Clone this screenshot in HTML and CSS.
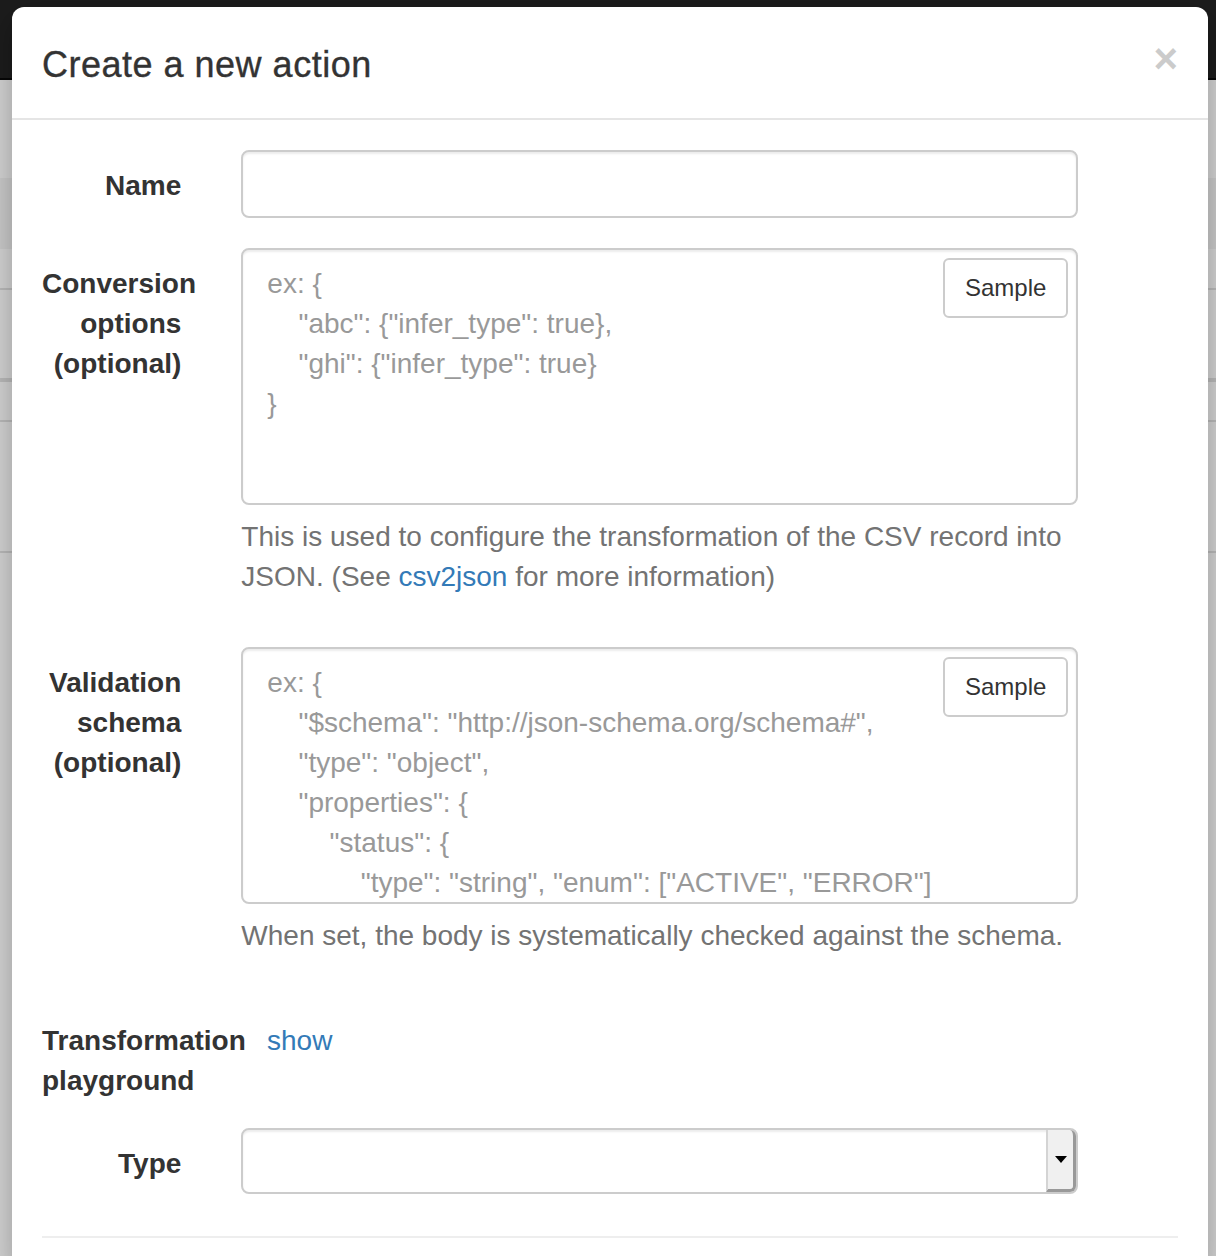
FILE: index.html
```html
<!DOCTYPE html>
<html lang="en">
<head>
<meta charset="utf-8">
<title>Create a new action</title>
<link rel="stylesheet" href="styles.css">
</head>
<body>
  <div class="page">
    <div class="page-nav"></div>
    <div class="page-band"></div>
    <div class="page-row row-a"></div>
    <div class="page-row row-b"></div>
    <div class="page-row row-c"></div>
    <div class="page-row row-d"></div>
  </div>

  <div class="modal">
    <div class="modal-header">
      <h4 class="modal-title">Create a new action</h4>
      <button class="close" type="button" aria-label="Close">×</button>
    </div>
    <div class="modal-body">
      <form class="form-horizontal">
        <div class="form-group">
          <label class="control-label" for="name">Name</label>
          <div class="control-col">
            <input class="form-control" id="name" type="text">
          </div>
        </div>

        <div class="form-group">
          <label class="control-label" for="conv">Conversion options (optional)</label>
          <div class="control-col">
            <div class="textarea-wrap">
              <textarea class="form-control code-area" id="conv" placeholder="ex: {&#10;    &quot;abc&quot;: {&quot;infer_type&quot;: true},&#10;    &quot;ghi&quot;: {&quot;infer_type&quot;: true}&#10;}"></textarea>
              <button class="btn-sample" type="button">Sample</button>
            </div>
            <p class="help-block"><span>This is used to configure the transformation of the CSV record into</span> <span>JSON. (See</span> <a href="#">csv2json</a> <span>for more information)</span></p>
          </div>
        </div>

        <div class="form-group">
          <label class="control-label" for="schema">Validation schema (optional)</label>
          <div class="control-col">
            <div class="textarea-wrap">
              <textarea class="form-control code-area" id="schema" placeholder="ex: {&#10;    &quot;$schema&quot;: &quot;http://json-schema.org/schema#&quot;,&#10;    &quot;type&quot;: &quot;object&quot;,&#10;    &quot;properties&quot;: {&#10;        &quot;status&quot;: {&#10;            &quot;type&quot;: &quot;string&quot;, &quot;enum&quot;: [&quot;ACTIVE&quot;, &quot;ERROR&quot;]&#10;        }&#10;    }&#10;}"></textarea>
              <button class="btn-sample" type="button">Sample</button>
            </div>
            <p class="help-block">When set, the body is systematically checked against the schema.</p>
          </div>
        </div>

        <div class="playground">
          <span class="playground-label">Transformation playground</span>
          <a class="playground-link" href="#">show</a>
        </div>

        <div class="form-group">
          <label class="control-label" for="type">Type</label>
          <div class="control-col">
            <div class="select-wrap">
              <select class="form-control select" id="type">
                <option value=""></option>
              </select>
              <span class="select-arrow"><span class="caret"></span></span>
            </div>
          </div>
        </div>

        <hr class="divider">
      </form>
    </div>
  </div>
</body>
</html>
```

FILE: styles.css
```css
* {
  box-sizing: border-box;
}

html, body {
  margin: 0;
  height: 1256px;
  overflow: hidden;
}

body {
  position: relative;
  background: #d2d2d2;
  font-family: "Liberation Sans", Arial, sans-serif;
  font-size: 28px;
  line-height: 40px;
  color: #333;
}

/* dimmed page behind the modal */
.page-nav {
  height: 80px;
  background: #1c1c1c;
  border-bottom: 2px solid #070707;
}

.page-band {
  height: 71px;
  margin-top: 98px;
  background: #c9c9c9;
}

.page-row {
  border-bottom: 2px solid #b9b9b9;
}

.row-a { height: 41px; }
.row-b { height: 92px; border-bottom-width: 4px; }
.row-c { height: 40px; }
.row-d { height: 131px; }

/* modal */
.modal {
  position: absolute;
  top: 7px;
  left: 12px;
  width: 1196px;
  background: #fff;
  border-radius: 12px;
  box-shadow: 0 10px 30px rgba(0, 0, 0, 0.28);
}

.modal-header {
  display: flex;
  justify-content: space-between;
  align-items: flex-start;
  padding: 32px 30px 28px;
  border-bottom: 2px solid #e5e5e5;
}

.modal-title {
  margin: 0;
  font-size: 36px;
  line-height: 51px;
  font-weight: 500;
  letter-spacing: 0.5px;
  -webkit-text-stroke: 0.35px #333;
  color: #333;
}

.close {
  padding: 0;
  margin: -1px 0 0;
  border: 0;
  background: none;
  font-family: "Liberation Sans", Arial, sans-serif;
  font-size: 42px;
  line-height: 42px;
  font-weight: bold;
  color: #000;
  opacity: 0.2;
  cursor: pointer;
}

.modal-body {
  padding: 30px;
}

.form-horizontal {
  margin: 0;
}

.form-group {
  display: grid;
  grid-template-columns: 16.6667% 75%;
  margin: 0 -30px 30px;
}

.control-label {
  padding: 16px 30px 0;
  text-align: right;
  font-weight: bold;
}

.control-col {
  padding: 0 30px;
}

.form-control {
  display: block;
  width: 100%;
  height: 68px;
  padding: 12px 24px;
  font-family: "Liberation Sans", Arial, sans-serif;
  font-size: 28px;
  line-height: 40px;
  color: #555;
  background: #fff;
  border: 2px solid #ccc;
  border-radius: 8px;
  box-shadow: inset 0 2px 2px rgba(0, 0, 0, 0.075);
  outline: none;
}

.textarea-wrap,
.select-wrap {
  position: relative;
}

.code-area {
  height: 257px;
  padding: 14px 24px 10px;
  resize: none;
  overflow: hidden;
}

.code-area::placeholder {
  color: #999;
  opacity: 1;
}

.btn-sample {
  position: absolute;
  top: 10px;
  right: 10px;
  padding: 10px 20px;
  font-family: "Liberation Sans", Arial, sans-serif;
  font-size: 24px;
  line-height: 36px;
  color: #333;
  background: #fff;
  border: 2px solid #ccc;
  border-radius: 6px;
}

.help-block {
  display: block;
  margin: 12px 0 20px;
  color: #737373;
}

a {
  color: #337ab7;
  text-decoration: none;
}

.playground {
  display: flex;
  align-items: flex-start;
  padding-top: 15px;
  margin-bottom: 27px;
}

.playground-label {
  width: 225px;
  font-weight: bold;
}

.select {
  appearance: none;
  -webkit-appearance: none;
  height: 66px;
  padding-right: 40px;
}

.select-arrow {
  position: absolute;
  top: 2px;
  right: 2px;
  bottom: 2px;
  width: 30px;
  display: flex;
  align-items: center;
  justify-content: center;
  background: #f0f0f0;
  border-left: 2px solid #d4d4d4;
  border-right: 3px solid #999;
  border-bottom: 3px solid #999;
  border-radius: 0 6px 6px 0;
}

.caret {
  width: 0;
  height: 0;
  border-left: 6px solid transparent;
  border-right: 6px solid transparent;
  border-top: 7px solid #000;
}

.divider {
  margin: 42px 0 0;
  border: 0;
  border-top: 2px solid #eee;
}
```
